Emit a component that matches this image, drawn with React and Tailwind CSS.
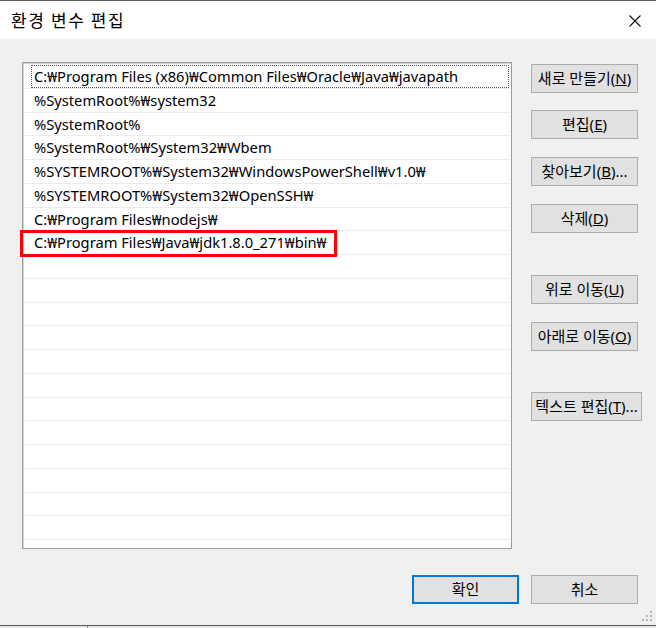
import React from 'react';

const ROWS = [
  'C:₩Program Files (x86)₩Common Files₩Oracle₩Java₩javapath',
  '%SystemRoot%₩system32',
  '%SystemRoot%',
  '%SystemRoot%₩System32₩Wbem',
  '%SYSTEMROOT%₩System32₩WindowsPowerShell₩v1.0₩',
  '%SYSTEMROOT%₩System32₩OpenSSH₩',
  'C:₩Program Files₩nodejs₩',
  'C:₩Program Files₩Java₩jdk1.8.0_271₩bin₩',
];

const FONT = "font-['Noto_Sans','Noto_Sans_CJK_KR',sans-serif]";

const Btn = ({ label, hot, tail, className = '' }) => (
  <div
    className={`h-[29px] flex items-center justify-center bg-[#e1e1e1] border border-[#adadad] text-[15px] leading-none text-black whitespace-nowrap ${className}`}
  >
    {label}(<u>{hot}</u>){tail}
  </div>
);

export default function App() {
  const rows = [...ROWS, ...Array(12).fill('')];

  return (
    <div className={`w-[656px] h-[628px] flex flex-col bg-[#f0f0f0] overflow-hidden ${FONT}`}>
      {/* Title bar */}
      <div className="h-[39px] shrink-0 bg-white border-t border-[#5f5f5f] flex items-center justify-between pl-[11px] pr-[15px]">
        <span className="text-[17px] tracking-[1.6px] text-black font-['Noto_Sans_CJK_KR',sans-serif]">환경 변수 편집</span>
        <svg width="12" height="12" viewBox="0 0 12 12" className="mt-[1px]">
          <path d="M0.5 0.5 L11.5 11.5 M11.5 0.5 L0.5 11.5" stroke="#111" strokeWidth="1.1" fill="none" />
        </svg>
      </div>

      {/* Body */}
      <div className="flex-1 relative">
        <div className="flex pl-[22px] pt-[23px]">
          {/* List */}
          <div className="relative w-[490px] h-[487px] bg-white border border-[#9c9c9c] shadow-[inset_1px_1px_0_#d4d4d4] pt-[2px] pl-[2px] pr-[1px]">
            {rows.map((r, i) => (
              <div
                key={i}
                className="relative h-[23.75px] border-b border-[#ececec] flex items-center pl-[9px] text-[14.7px] leading-none text-black whitespace-nowrap"
              >
                {i === 0 && (
                  <div className="absolute left-[6px] right-[1px] top-0 bottom-0 border border-dotted border-[#555]" />
                )}
                <span className="relative">{r}</span>
              </div>
            ))}
            {/* red annotation box */}
            <div className="absolute left-[-3px] top-[167px] w-[317px] h-[27px] border-[3px] border-[#ff0000]" />
          </div>

          {/* Right buttons */}
          <div className="ml-[19px] pt-[2px] flex flex-col">
            <Btn label="새로 만들기" hot="N" className="w-[107px]" />
            <Btn label="편집" hot="E" className="w-[107px] mt-[17px]" />
            <Btn label="찾아보기" hot="B" tail="..." className="w-[107px] mt-[18px]" />
            <Btn label="삭제" hot="D" className="w-[107px] mt-[18px]" />
            <Btn label="위로 이동" hot="U" className="w-[107px] mt-[42px]" />
            <Btn label="아래로 이동" hot="O" className="w-[107px] mt-[18px]" />
            <Btn label="텍스트 편집" hot="T" tail="..." className="w-[111px] mt-[41px]" />
          </div>
        </div>

        {/* Bottom buttons */}
        <div className="flex justify-end gap-[12px] pr-[18px] mt-[26px]">
          <div className="w-[107px] h-[29px] flex items-center justify-center bg-[#e1e1e1] border-2 border-[#0078d7] text-[15px] leading-none text-black">
            확인
          </div>
          <div className="w-[107px] h-[29px] flex items-center justify-center bg-[#e1e1e1] border border-[#adadad] text-[15px] leading-none text-black">
            취소
          </div>
        </div>

        {/* resize grip */}
        <svg width="12" height="12" viewBox="0 0 12 12" className="absolute right-[3px] bottom-[3px]">
          {[[9, 1], [9, 5], [5, 5], [9, 9], [5, 9], [1, 9]].map(([x, y], i) => (
            <rect key={i} x={x} y={y} width="2" height="2" fill="#b4b4b4" />
          ))}
        </svg>
      </div>

      {/* bottom edge */}
      <div className="h-[1px] shrink-0 bg-[#595959]" />
      <div className="h-[2px] shrink-0 flex bg-[#e6e6e6]">
        <div className="w-[88px] border-r border-[#8a8a8a]" />
      </div>
    </div>
  );
}
